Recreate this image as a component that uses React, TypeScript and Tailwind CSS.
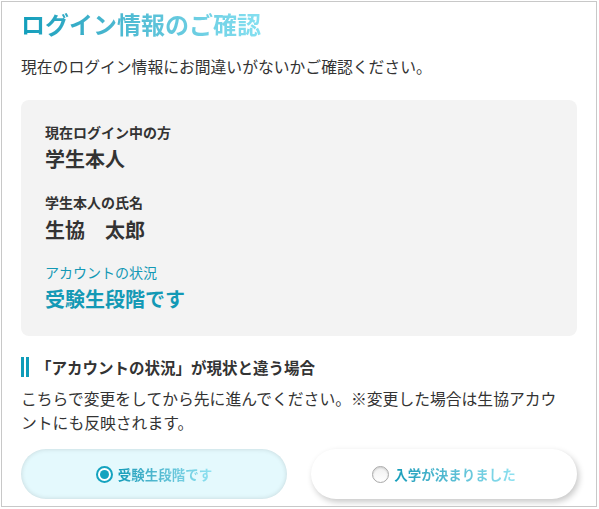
import React from "react";

const jp = { fontFamily: '"Noto Sans CJK JP", "Noto Sans", sans-serif' };

const Radio = ({ checked }: { checked: boolean }) =>
  checked ? (
    <span className="flex h-[17px] w-[17px] items-center justify-center rounded-full border-2 border-[#14a3bf] bg-white">
      <span className="h-[9px] w-[9px] rounded-full bg-[#14a3bf]" />
    </span>
  ) : (
    <span className="h-[17px] w-[17px] rounded-full border-[1.5px] border-[#a9a9a9] bg-gradient-to-b from-[#f0f0f0] to-white shadow-[inset_0_1px_2px_rgba(0,0,0,0.15)]" />
  );

const Choice = ({ label, checked }: { label: string; checked: boolean }) => (
  <button
    className={
      "flex h-[50px] items-center justify-center gap-[5px] rounded-full " +
      (checked
        ? "bg-[#e4f9fd] shadow-[inset_0_0_5px_rgba(0,0,0,0.14)]"
        : "bg-white shadow-[2px_3px_6px_rgba(0,0,0,0.22)]")
    }
  >
    <Radio checked={checked} />
    <span className="bg-gradient-to-r from-[#0c9cb9] to-[#8fe2f1] bg-clip-text text-[13.5px] font-bold leading-[20px] text-transparent">
      {label}
    </span>
  </button>
);

export default function App() {
  return (
    <div className="bg-white p-px" style={jp}>
      <div className="h-[506px] w-[596px] overflow-hidden border border-[#c8c8c8] px-[19px] pt-[4px] text-[#333]">
        <h1 className="inline-block bg-gradient-to-r from-[#0d9ebb] to-[#85e0f1] bg-clip-text text-[24px] font-bold leading-[36px] text-transparent">
          ログイン情報のご確認
        </h1>

        <p className="mt-[13px] text-[15.8px] leading-[24px]">
          現在のログイン情報にお間違いがないかご確認ください。
        </p>

        <div className="mt-[21px] rounded-[8px] bg-[#f3f3f3] pb-[23px] pl-[24px] pt-[22px]">
          <div className="text-[14px] font-bold leading-[20px]">現在ログイン中の方</div>
          <div className="mt-[3px] text-[20px] font-bold leading-[28px]">学生本人</div>

          <div className="mt-[19px] text-[14px] font-bold leading-[20px]">学生本人の氏名</div>
          <div className="mt-[4px] text-[20px] font-bold leading-[28px]">生協　太郎</div>

          <div className="mt-[18px] text-[14px] leading-[20px] text-[#1399b5]">アカウントの状況</div>
          <div className="mt-[3px] text-[20px] font-bold leading-[28px] text-[#1399b5]">受験生段階です</div>
        </div>

        <div className="mt-[19px] flex items-center">
          <span className="h-[20px] w-[3px] bg-[#0e9cb9]" />
          <span className="ml-[2px] h-[20px] w-[3px] bg-[#0e9cb9]" />
          <h2 className="ml-[7px] text-[15.5px] font-bold leading-[24px]">
            「アカウントの状況」が現状と違う場合
          </h2>
        </div>

        <p className="mt-[8px] text-[15.8px] leading-[24px]">
          こちらで変更をしてから先に進んでください。※変更した場合は生協アカウ
          <br />
          ントにも反映されます。
        </p>

        <div className="mt-[14px] grid grid-cols-2 gap-[24px]">
          <Choice label="受験生段階です" checked />
          <Choice label="入学が決まりました" checked={false} />
        </div>
      </div>
    </div>
  );
}
